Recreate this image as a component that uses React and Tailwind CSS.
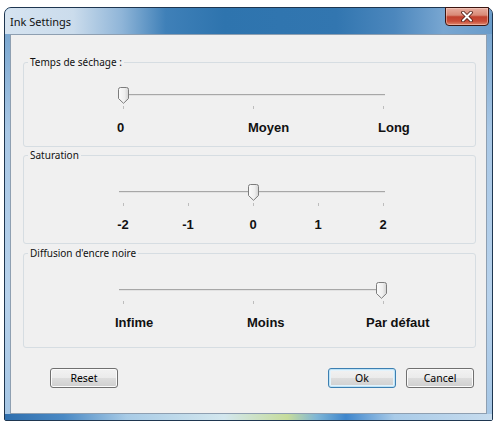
import React from "react";

const Thumb = () => (
  <svg width="11" height="17" viewBox="0 0 11 17">
    <defs>
      <linearGradient id="thumbg" x1="0" y1="0" x2="1" y2="0">
        <stop offset="0" stopColor="#fbfbfb" />
        <stop offset="0.6" stopColor="#efefef" />
        <stop offset="1" stopColor="#d2d2d2" />
      </linearGradient>
    </defs>
    <path
      d="M2.5 0.5H8.5Q10.5 0.5 10.5 2.5V11.5L5.5 16.3L0.5 11.5V2.5Q0.5 0.5 2.5 0.5Z"
      fill="url(#thumbg)"
      stroke="#7c7c7c"
    />
  </svg>
);

const Tick = () => <span className="block w-px h-[3px] bg-[#bdbdbd]" />;

const Track = () => (
  <div className="h-[2px] border-t border-[#a7a7a7] bg-[#e2e2e2]" />
);

const Btn = ({ children, primary, extra }) => (
  <button
    className={
      (primary
        ? "w-[68px] h-[20px] shrink-0 rounded-[3px] border border-[#3c7fb1] bg-[linear-gradient(180deg,#f2f2f2_0%,#ebebeb_50%,#dddddd_50%,#cfcfcf_100%)] shadow-[inset_0_0_0_1px_#bfe3f6,inset_0_0_0_2px_#e3f3fc] text-[10.5px] leading-[18px] text-black font-['Noto_Sans',sans-serif]"
        : "w-[68px] h-[20px] shrink-0 rounded-[3px] border border-[#707070] bg-[linear-gradient(180deg,#f2f2f2_0%,#ebebeb_50%,#dddddd_50%,#cfcfcf_100%)] shadow-[inset_0_0_0_1px_#fbfbfb] text-[10.5px] leading-[18px] text-black font-['Noto_Sans',sans-serif]") +
      (extra ? " " + extra : "")
    }
  >
    {children}
  </button>
);

const labelRow =
  "mt-[11px] flex text-[13px] leading-[15px] font-bold text-[#111] font-['Liberation_Sans',Arial,sans-serif] whitespace-nowrap";

export default function App() {
  return (
    <div className="w-[495px] h-[421px] bg-white pt-[7px] pl-[4px]">
      <div className="w-[489px] h-[414px] flex flex-col rounded-t-[7px] rounded-b-[2px] border border-[#1e3650] bg-[linear-gradient(180deg,#6f9fcb_0%,#a9c8e6_30%,#b7d2ec_70%,#a5c6e5_100%)]">
        {/* Title bar */}
        <div className="relative h-[26px] shrink-0 rounded-t-[6px] flex items-center pl-[5px] bg-[linear-gradient(90deg,#d5e3f0_0%,#cbdcec_14%,#8fb5d8_24%,#3f80b8_33%,#2e74ae_45%,#3276b0_68%,#4c87bd_80%,#78a6d1_90%,#6a9cca_100%)]">
          <span className="text-[11px] text-[#111] font-['Noto_Sans',sans-serif] leading-none">
            Ink Settings
          </span>
          <div className="absolute right-[3px] top-[-1px] w-[44px] h-[19px] rounded-b-[4px] border border-[#3b1510] bg-[linear-gradient(180deg,#e7ad9f_0%,#d98a77_42%,#c1412e_52%,#c94d38_78%,#e08a70_100%)] shadow-[inset_0_0_0_1px_rgba(255,220,210,0.45)] flex items-center justify-center">
            <svg width="12" height="11" viewBox="0 0 12 11">
              <path d="M2 1.5L10 9.5M10 1.5L2 9.5" stroke="#4b1a12" strokeWidth="3.6" strokeLinecap="round" />
              <path d="M2 1.5L10 9.5M10 1.5L2 9.5" stroke="#ffffff" strokeWidth="2" strokeLinecap="round" />
            </svg>
          </div>
        </div>

        {/* Middle with side frames */}
        <div className="px-[5px]">
          <div className="h-[380px] flex flex-col border border-[#8e9fb1] bg-[#f0f0f0] pt-[20px]">
            {/* Group 1 */}
            <fieldset className="ml-[12px] mr-[10px] min-w-0 border border-[#d6dde2] rounded-[3px]">
              <legend className="ml-[4px] px-[2px] text-[10px] leading-[14px] text-[#111] font-['Noto_Sans',sans-serif]">
                Temps de séchage :
              </legend>
              <div className="pt-[18px] pb-[11px] pl-[95px]">
                <div className="w-[266px]">
                  <div className="relative h-[17px] pt-[7px]">
                    <Track />
                    <div className="absolute top-0 left-[-1px]">
                      <Thumb />
                    </div>
                  </div>
                  <div className="mt-[2px] ml-[4px] w-[261px] flex justify-between">
                    <Tick />
                    <Tick />
                    <Tick />
                  </div>
                  <div className={labelRow + " -ml-[2px]"}>
                    <span className="w-[131px] shrink-0">0</span>
                    <span className="w-[130px] shrink-0">Moyen</span>
                    <span className="shrink-0">Long</span>
                  </div>
                </div>
              </div>
            </fieldset>

            {/* Group 2 */}
            <fieldset className="mt-[1px] ml-[12px] mr-[10px] min-w-0 border border-[#d6dde2] rounded-[3px]">
              <legend className="ml-[4px] px-[2px] text-[10px] leading-[14px] text-[#111] font-['Noto_Sans',sans-serif]">
                Saturation
              </legend>
              <div className="pt-[22px] pb-[11px] pl-[95px]">
                <div className="w-[266px]">
                  <div className="relative h-[17px] pt-[7px]">
                    <Track />
                    <div className="absolute top-0 left-[129px]">
                      <Thumb />
                    </div>
                  </div>
                  <div className="mt-[2px] ml-[4px] w-[261px] flex justify-between">
                    <Tick />
                    <Tick />
                    <Tick />
                    <Tick />
                    <Tick />
                  </div>
                  <div className={labelRow + " -ml-[16px] gap-[25px]"}>
                    <span className="w-[40px] shrink-0 text-center">-2</span>
                    <span className="w-[40px] shrink-0 text-center">-1</span>
                    <span className="w-[40px] shrink-0 text-center">0</span>
                    <span className="w-[40px] shrink-0 text-center">1</span>
                    <span className="w-[40px] shrink-0 text-center">2</span>
                  </div>
                </div>
              </div>
            </fieldset>

            {/* Group 3 */}
            <fieldset className="mt-[2px] ml-[12px] mr-[10px] min-w-0 border border-[#d6dde2] rounded-[3px]">
              <legend className="ml-[4px] px-[2px] text-[10px] leading-[14px] text-[#111] font-['Noto_Sans',sans-serif]">
                Diffusion d'encre noire
              </legend>
              <div className="pt-[22px] pb-[17px] pl-[95px]">
                <div className="w-[266px]">
                  <div className="relative h-[17px] pt-[7px]">
                    <Track />
                    <div className="absolute top-0 left-[257px]">
                      <Thumb />
                    </div>
                  </div>
                  <div className="mt-[2px] ml-[4px] w-[261px] flex justify-between">
                    <Tick />
                    <Tick />
                    <Tick />
                  </div>
                  <div className={labelRow + " -ml-[4px]"}>
                    <span className="w-[132px] shrink-0">Infime</span>
                    <span className="w-[119px] shrink-0">Moins</span>
                    <span className="shrink-0">Par défaut</span>
                  </div>
                </div>
              </div>
            </fieldset>

            {/* Buttons */}
            <div className="mt-[20px] flex items-center pl-[39px] pr-[12px]">
              <Btn>Reset</Btn>
              <div className="flex-1" />
              <Btn primary>Ok</Btn>
              <Btn extra="ml-[10px]">Cancel</Btn>
            </div>
          </div>
        </div>

        {/* Bottom frame */}
        <div className="flex-1 bg-[linear-gradient(90deg,#2f6fae_0%,#4a89c4_12%,#a8cbe6_25%,#d3e7ee_45%,#c6dc9c_58%,#7fb6d6_64%,#3f86cc_70%,#a9cbe8_80%,#c7dcee_100%)]" />
      </div>
    </div>
  );
}
